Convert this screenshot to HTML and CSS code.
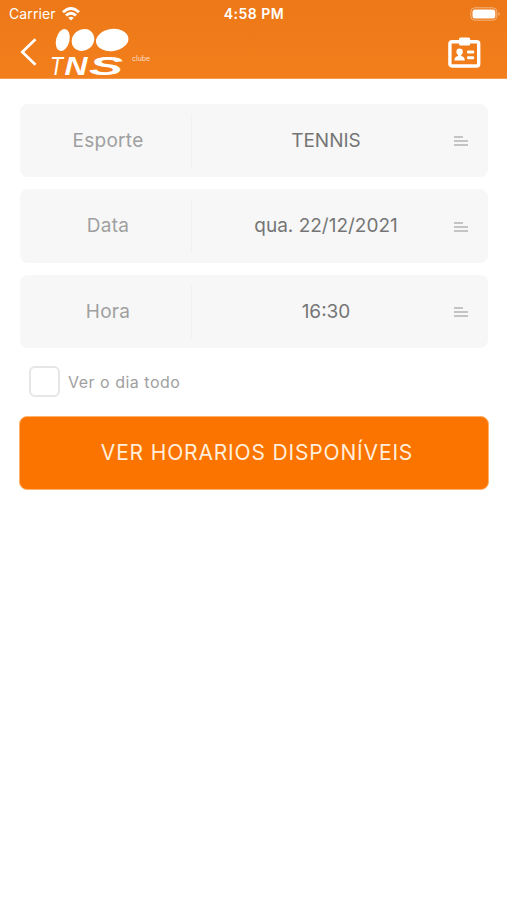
FILE: index.html
```
<!DOCTYPE html>
<html lang="pt-BR">
<head>
  <meta charset="utf-8">
  <title>100 TNS clube</title>
  <link rel="stylesheet" href="styles.css">
</head>
<body>
  <header class="header">
    <div class="status">
      <div class="carrier">
        <span>Carrier</span>
        <svg width="18" height="14" viewBox="0 0 18 14" fill="none" stroke="#fff" stroke-width="2.8">
          <path d="M1 5.3Q9-2.3 17 5.3"/>
          <path d="M4 8.6Q9 3.8 14 8.6"/>
          <path d="M9 13.6L6.2 10.8Q9 8.6 11.8 10.8Z" fill="#fff" stroke="none"/>
        </svg>
      </div>
      <div class="time">4:58 PM</div>
      <svg class="battery" width="31" height="14" viewBox="0 0 31 14">
        <rect x=".8" y=".8" width="26" height="12.4" rx="4" fill="none" stroke="#fff" stroke-opacity=".45"/>
        <rect x="2.5" y="2.5" width="22.8" height="9" rx="2.5" fill="#fff"/>
        <path d="M28.5 5Q31 7 28.5 9Z" fill="#fff" opacity=".5"/>
      </svg>
    </div>
    <div class="nav">
      <svg class="back" width="18" height="28" viewBox="0 0 18 28" fill="none" stroke="#fff" stroke-width="2.7">
        <path d="M15.5 1.2L2.3 14L15.5 26.8"/>
      </svg>
      <svg class="logo" width="102" height="58" viewBox="0 0 102 58" fill="#fff">
        <ellipse cx="11.8" cy="13" rx="6.7" ry="11.2" transform="rotate(14 11.8 13)"/>
        <ellipse cx="32" cy="13" rx="11.8" ry="10.4" transform="rotate(-38 32 13)"/>
        <ellipse cx="61.2" cy="13" rx="16.3" ry="11" transform="rotate(-8 61.2 13)"/>
        <text class="logo-t" x="-1" y="48" textLength="13" lengthAdjust="spacingAndGlyphs">T</text>
        <text class="logo-ns" x="13.5" y="48" textLength="23" lengthAdjust="spacingAndGlyphs">N</text>
        <text class="logo-ns" x="38" y="48" textLength="34" lengthAdjust="spacingAndGlyphs">S</text>
        <text class="logo-clube" x="81" y="34" textLength="18" lengthAdjust="spacingAndGlyphs">clube</text>
      </svg>
      <svg class="card" width="33" height="31" viewBox="0 0 33 31" fill="#fff">
        <rect x="1.9" y="4.7" width="28.8" height="24.3" rx="2" fill="none" stroke="#fff" stroke-width="3.4"/>
        <rect x="11" y=".6" width="11.2" height="8" rx="1.5"/>
        <circle cx="11.6" cy="14.8" r="3.2"/>
        <path d="M10 16h3.2v3q3.6.6 3.6 4.4H6.4Q6.4 19.6 10 19Z"/>
        <rect x="19" y="13.4" width="7.2" height="3" rx="1.2"/>
        <rect x="19" y="19.2" width="7.2" height="3" rx="1.2"/>
      </svg>
    </div>
  </header>

  <main class="main">
    <div class="field">
      <div class="label">Esporte</div>
      <div class="value">TENNIS</div>
      <div class="lines"><i></i><i></i><i></i></div>
    </div>
    <div class="field">
      <div class="label">Data</div>
      <div class="value">qua. 22/12/2021</div>
      <div class="lines"><i></i><i></i><i></i></div>
    </div>
    <div class="field">
      <div class="label">Hora</div>
      <div class="value">16:30</div>
      <div class="lines"><i></i><i></i><i></i></div>
    </div>
    <div class="check">
      <span class="check-box"></span>
      <span class="check-text">Ver o dia todo</span>
    </div>
    <button class="btn">VER HORARIOS DISPONÍVEIS</button>
  </main>
</body>
</html>
```

FILE: styles.css
```
* {
  margin: 0;
  padding: 0;
  box-sizing: border-box;
}
body {
  background: #fff;
  font-family: Inter, "Liberation Sans", sans-serif;
}
.header {
  height: 79px;
  background: linear-gradient(#ec7817, #f27e1c);
  border-bottom: 1px solid #f39a50;
  color: #fff;
}
.status {
  height: 27px;
  padding: 0 6px 0 9px;
  display: grid;
  grid-template-columns: 1fr auto 1fr;
  align-items: center;
  font-size: 14px;
}
.carrier {
  display: flex;
  align-items: center;
  gap: 6px;
  letter-spacing: 0.1px;
}
.time {
  margin-right: 2px;
  font-weight: 600;
  letter-spacing: 0.5px;
}
.battery {
  justify-self: end;
}
.nav {
  height: 50px;
  padding: 0 26px 0 20px;
  display: flex;
  align-items: center;
}
.logo {
  margin: 0 0 -8px 13px;
}
.logo-t {
  font: italic 400 26px "Liberation Sans", sans-serif;
}
.logo-ns {
  font: italic 700 26px "Liberation Sans", sans-serif;
}
.logo-clube {
  font-size: 7px;
  opacity: 0.75;
}
.card {
  margin-left: auto;
}
.main {
  padding: 25px 19px 0 20px;
}
.field {
  height: 73.2px;
  margin-bottom: 12.3px;
  display: flex;
  align-items: center;
  border-radius: 8px;
  background: #f7f7f7;
  font-size: 19px;
}
.label {
  width: 172px;
  height: 54px;
  padding-left: 5px;
  line-height: 53px;
  text-align: center;
  letter-spacing: 0.3px;
  color: #a0a0a0;
  border-right: 1px solid #f1f1f1;
}
.value {
  width: 268px;
  line-height: 52px;
  text-align: center;
  color: #757575;
}
.lines {
  width: 14px;
  margin: 1px 0 0 -6px;
}
.lines i {
  display: block;
  height: 2px;
  margin-bottom: 2px;
  background: #c4c4c4;
}
.lines i:first-child {
  width: 9px;
}
.lines i:last-child {
  margin-bottom: 0;
}
.check {
  height: 32px;
  margin: 17.5px 0 0 9px;
  display: flex;
  align-items: center;
}
.check-box {
  width: 31px;
  height: 31px;
  border: 2px solid #e6e6e6;
  border-radius: 6px;
}
.check-text {
  margin-left: 8px;
  font-size: 16px;
  letter-spacing: 0.5px;
  color: #a0a0a0;
}
.btn {
  width: 470px;
  height: 74px;
  margin: 18px 0 0 -1px;
  padding: 0 0 1px 6px;
  display: block;
  border: 1px solid #ffb36b;
  border-radius: 8px;
  background: #fc7400;
  color: #ffeedb;
  font: 400 21px Inter, "Liberation Sans", sans-serif;
  letter-spacing: 0.84px;
  white-space: nowrap;
}
```
